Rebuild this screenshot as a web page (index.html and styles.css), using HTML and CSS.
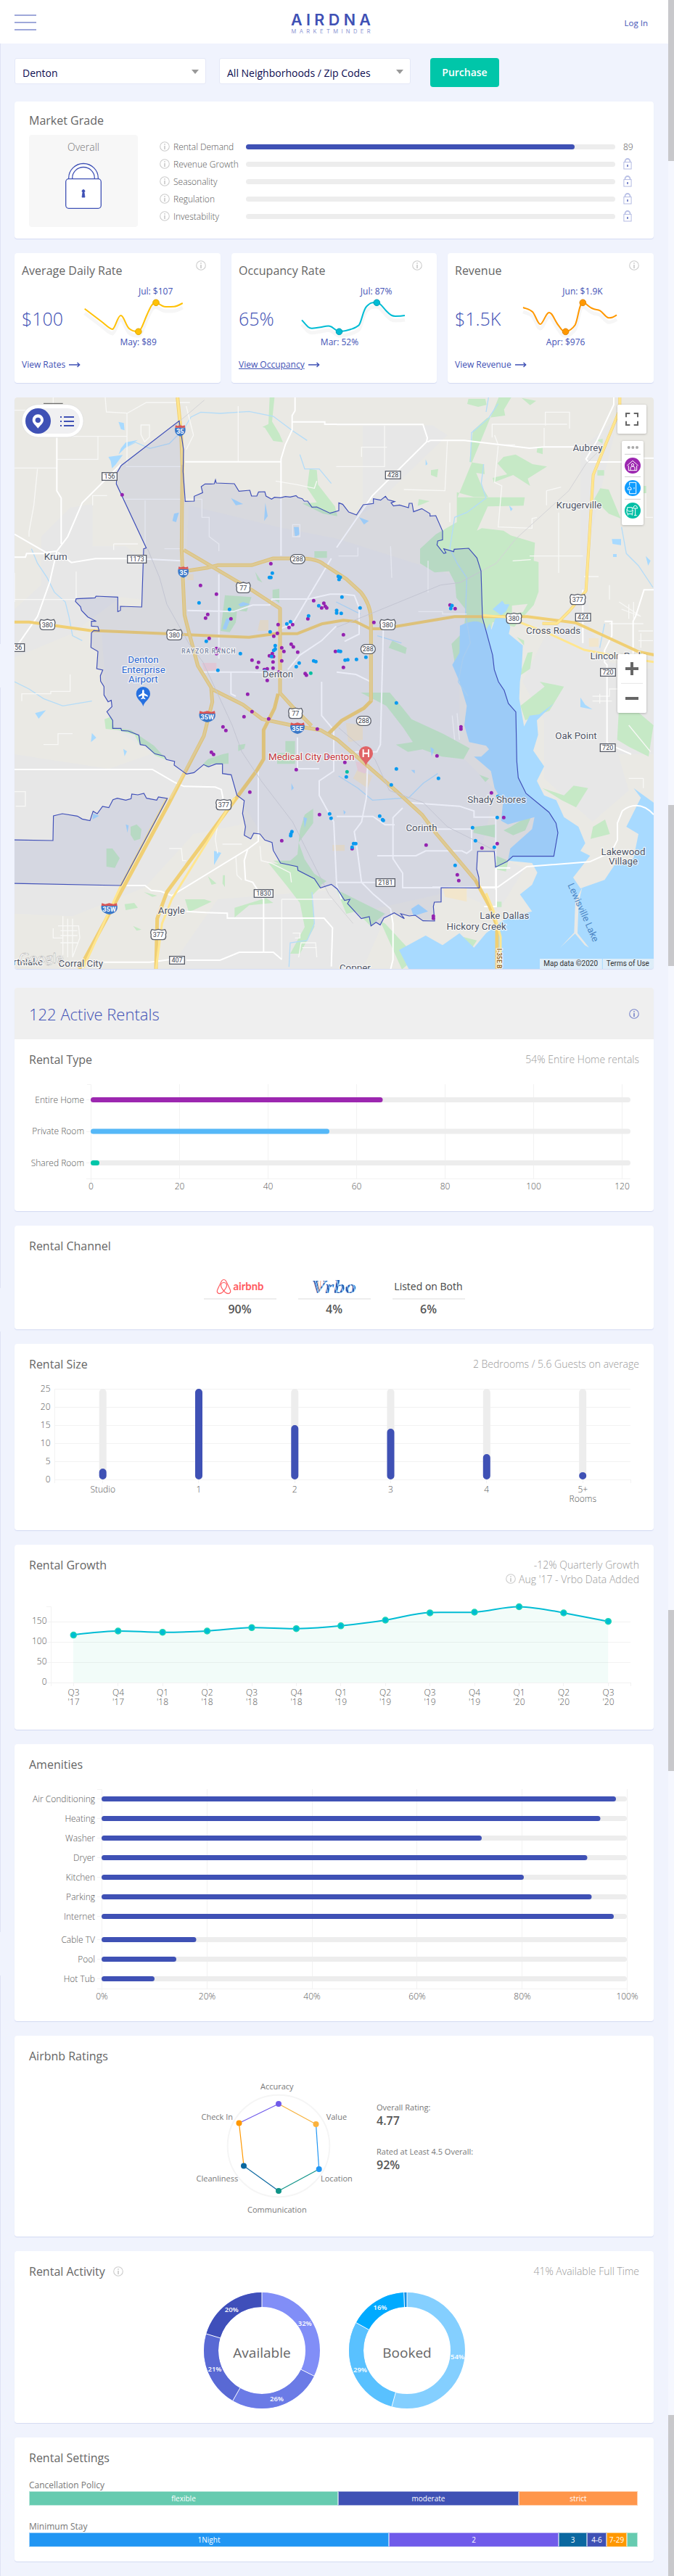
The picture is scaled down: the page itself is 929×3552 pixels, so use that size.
FILE: index.html
```html
<!DOCTYPE html>
<html lang="en">
<head>
<meta charset="utf-8">
<title>AirDNA MarketMinder</title>
<link rel="stylesheet" href="styles.css">
</head>
<body>
<svg class="defs" width="0" height="0">
  <symbol id="info" viewBox="0 0 14 14"><circle cx="7" cy="7" r="6.3" fill="none" stroke="currentColor" stroke-width="1.1"/><path d="M7 3.2v1.6M7 6v5" stroke="currentColor" stroke-width="1.7"/></symbol>
  <symbol id="lock" viewBox="0 0 12 16"><path d="M2.500 6V4.500a3.500 3.500 0 0 1 7 0V6" fill="none" stroke="#b9c0e6" stroke-width="1.800"/><rect x=".9" y="5.600" width="10.200" height="9.400" fill="#fff" stroke="#b4bbe3"/><path d="M6 9v3" stroke="#3f51b5" stroke-width="1.300"/></symbol>
  <symbol id="arrow" viewBox="0 0 16 8"><path d="M0 4h14.500M11.500 1l3.200 3-3.200 3" fill="none" stroke="#3f51b5" stroke-width="1.400"/></symbol>
</svg>
<header class="topbar">
  <div class="burger"><i></i><i></i><i></i></div>
  <svg class="logo" width="112" height="32" viewBox="401 16 112 32">
    <text x="402" y="34.500" class="logo-main" textLength="110">AIRDNA</text>
    <text x="402.500" y="46" class="logo-sub" textLength="109">MARKETMINDER</text>
  </svg>
  <a class="login">Log In</a>
</header>
<main class="page">
  <div class="filters">
    <div class="select"><span>Denton</span><i></i></div>
    <div class="select second"><span>All Neighborhoods / Zip Codes</span><i></i></div>
    <div class="purchase">Purchase</div>
  </div>

  <section class="card grade">
    <h2>Market Grade</h2>
    <div class="grade-body">
      <div class="overall"><span>Overall</span>
        <svg width="54" height="66" viewBox="88 224 54 66" fill="#fff" stroke="#3f51b5" stroke-width="1.300"><path d="M94.700 247V245.500a20.300 20 0 0 1 40.600 0V247zM99.700 247v-1.500a15.300 15 0 0 1 30.600 0V247z"/><rect x="90.700" y="246.700" width="48.600" height="40.600" rx="4"/><path d="M115 261.500a2 2 0 0 1 1 3.700l1 6.800h-4l1-6.800a2 2 0 0 1 1-3.700z" fill="#3f51b5" stroke-width=".8"/></svg>
      </div>
      <div class="rows">
        <div class="row"><svg class="ic"><use href="#info"/></svg><label>Rental Demand</label><div class="track"><b style="width:453px"></b></div><em>89</em></div>
        <div class="row"><svg class="ic"><use href="#info"/></svg><label>Revenue Growth</label><div class="track"></div><svg class="lk"><use href="#lock"/></svg></div>
        <div class="row"><svg class="ic"><use href="#info"/></svg><label>Seasonality</label><div class="track"></div><svg class="lk"><use href="#lock"/></svg></div>
        <div class="row"><svg class="ic"><use href="#info"/></svg><label>Regulation</label><div class="track"></div><svg class="lk"><use href="#lock"/></svg></div>
        <div class="row"><svg class="ic"><use href="#info"/></svg><label>Investability</label><div class="track"></div><svg class="lk"><use href="#lock"/></svg></div>
      </div>
    </div>
  </section>

  <div class="trio">
    <section class="card stat">
      <div class="stat-head"><h2>Average Daily Rate</h2><svg class="ic"><use href="#info"/></svg></div>
      <div class="stat-body"><strong>$100</strong>
        <svg width="160" height="90" viewBox="111 392 160 90" class="spark">
          <path class="shade" d="M116.700 425.700L142 445C149 451 152 454 155 454C159 453 162 435 166.500 435C171 435 173 449 178.300 453.300S187 457 190.800 457.300C195 456 198 444 202.600 434S209 418 215 417.300C219 418 222 422 226.300 422.700S236 423 240 422.700S248 420 251.800 418"/>
          <path stroke="#ffc107" d="M116.700 425.700L142 445C149 451 152 454 155 454C159 453 162 435 166.500 435C171 435 173 449 178.300 453.300S187 457 190.800 457.300C195 456 198 444 202.600 434S209 418 215 417.300C219 418 222 422 226.300 422.700S236 423 240 422.700S248 420 251.800 418"/>
          <g fill="#ffc107" stroke="#e0a800"><circle cx="190.800" cy="457.300" r="4.300"/><circle cx="215" cy="417.300" r="4.300"/></g>
          <text x="214.600" y="406">Jul: $107</text><text x="190.600" y="476">May: $89</text>
        </svg></div>
      <a class="view"><span>View Rates</span> <svg width="16" height="8"><use href="#arrow"/></svg></a>
    </section>
    <section class="card stat">
      <div class="stat-head"><h2>Occupancy Rate</h2><svg class="ic"><use href="#info"/></svg></div>
      <div class="stat-body"><strong>65%</strong>
        <svg width="160" height="90" viewBox="400 392 160 90" class="spark">
          <path class="shade" d="M407 441.300C413 448 416 453 421 452.700S428 452 432.500 451.300S441 449 445.500 449.700S453 456 458.500 457.300C463 457 469 456 474 454.300S482 452 485.800 448.300C490 442 491 428 496.500 422.300S505 417 510 417C515 417 518 423 523.700 429S532 436 536 436S544 436 549 435"/>
          <path stroke="#00bcd4" d="M407 441.300C413 448 416 453 421 452.700S428 452 432.500 451.300S441 449 445.500 449.700S453 456 458.500 457.300C463 457 469 456 474 454.300S482 452 485.800 448.300C490 442 491 428 496.500 422.300S505 417 510 417C515 417 518 423 523.700 429S532 436 536 436S544 436 549 435"/>
          <g fill="#00bcd4" stroke="#009db5"><circle cx="458.500" cy="457.300" r="4.300"/><circle cx="510.300" cy="417.300" r="4.300"/></g>
          <text x="509.600" y="406">Jul: 87%</text><text x="459" y="476">Mar: 52%</text>
        </svg></div>
      <a class="view"><span class="under">View Occupancy</span> <svg width="16" height="8"><use href="#arrow"/></svg></a>
    </section>
    <section class="card stat">
      <div class="stat-head"><h2>Revenue</h2><svg class="ic"><use href="#info"/></svg></div>
      <div class="stat-body"><strong>$1.5K</strong>
        <svg width="160" height="90" viewBox="708 392 160 90" class="spark">
          <path class="shade" d="M721 424C726 426 730 426 734 430S741 447 744.700 447S752 432 756.500 431S764 441 769.500 448.300S775 457 779.600 457.300S790 452 792.600 448.300C797 440 798 418 803.300 417.300C807 417 810 422 815.800 425S823 426 827 428.300S835 438 838.900 438.300S846 437 850 434.300"/>
          <path stroke="#ff9800" d="M721 424C726 426 730 426 734 430S741 447 744.700 447S752 432 756.500 431S764 441 769.500 448.300S775 457 779.600 457.300S790 452 792.600 448.300C797 440 798 418 803.300 417.300C807 417 810 422 815.800 425S823 426 827 428.300S835 438 838.900 438.300S846 437 850 434.300"/>
          <g fill="#ff9800" stroke="#e08300"><circle cx="779.600" cy="457.300" r="4.300"/><circle cx="803.300" cy="417.300" r="4.300"/></g>
          <text x="803" y="406">Jun: $1.9K</text><text x="779.600" y="476">Apr: $976</text>
        </svg></div>
      <a class="view"><span>View Revenue</span> <svg width="16" height="8"><use href="#arrow"/></svg></a>
    </section>
  </div>

  <section class="card map">
  <svg width="881" height="788" viewBox="60 24 2643 2364" class="mapsvg">
    <rect x="60" y="24" width="2643" height="2364" fill="#eae9e4"/>
    <g fill="#e7e7e7">
      <path d="M170 600L290 480L383 465V640L520 640L600 700L590 860L500 850L300 1000L60 1100V1500L450 1560L680 1480L770 1580L900 1560L1000 1600L1000 1790L800 1830L600 2050L300 2170L60 2160V1300H60V900L170 800z"/>
      <path d="M1540 480L1850 180L1790 140H1500V500zM2400 240L2560 100L2500 340L2420 700L2440 980L2520 1120L2703 1150V1500H2330L2160 1200L2260 1000L2400 840zM1392 2060L1600 2160L1500 2388H700L900 2100zM2250 1350L2500 1310L2600 1650L2450 1780L2250 1600zM1980 1900L2170 1970L2060 2150L1850 2050z"/>
      <path d="M780 470L1150 560L1400 610L2000 800L1900 1050L1900 1500L2050 1650L1950 2050L1500 2150L1160 1950L1000 1700L760 1580L450 1380L420 1000L760 1000z"/>
    </g>
    <g fill="#c6e9c6">
      <path d="M1115 24h20l-10 100 30 50 15 35-40-5-35-55-10-3 25-12zM1280 320l30 5 5 60 70 90 10 40-60-10-85-42 60-5-40-60zM1300 660h52v28h-52zM930 842l110 8-20 60-40-5-5 50-25 40-38-5 10-80zM1055 745l30 45-20-10zM1127 820l28-5v60l-28-20z"/>
      <path transform="translate(1392 0)" d="M670 24h52l-30 50 5 25-75 10-58 52-15 130 60 10 3 40-35-5 25 60 25 40-60 0-70-20V540L410 590l-65 60v60l60 38 60-5 25 50 5 60 40 50-10 90-50 50 20 120 80 90 70-300 90 20 80-90 20-55V705l-20-5 5-75-100-30-30-20-90-10-20 10 45-100 148-3 5-35H500M545 30h70l5 25-35 8-45-12zM765 26l60 12-25 18zM690 270l50-10 70 40 60 10-80 50 10 30-70-45-80 30-5-18 60-15-40-45zM1075 200l25-5v20zM830 232l22-3v30l-25-8zM1078 325h28v22h-28zM1090 400l35 5 50 120-50-20-60-60zM725 885l65-7-20 35-45 5zM745 1015l30 15v20zM790 1080l20-3-10 70-45 30zM390 325l30-5-5 35-25-10zM340 445l45 8-50 20zM230 1030l60 30-5 25-70-25zM1260 390h20v30h-20z"/>
      <path transform="translate(0 1200)" d="M460 145l-28 10 5 40 50 5 70 20 20 40 25 5 40 40 50 20-55-60-95-65-70-10zM540 600l25-10 20 20-5 40-25 8-15-25zM440 690l25 0 30 40-20 40-35-5zM515 920l40-5 15 20-50 10zM765 900l80 0 30 10-75 35-20 5zM550 1010l35 15-20 5zM985 262l30-5-5 20-25 10zM1180 245h40v95h-74v-45h34zM1260 550l35-25v60l-60 80 25 70 40 60 50 30-30 20-110-60-80-45 70 0 30-25 10-100zM920 300l25-5v45h-70l-20 15-15-15 20-20zM595 870l55 15-20 5zM860 805l35 30-20 5zM922 800h8v50l-10-15zM1110 750l130 10 90 85-40 40 10 130-60 110-40 0 60-110-20-100-50-65zM1100 895l30 20-100 10-60 50 0-40z"/>
      <path transform="translate(1392 1200)" d="M100 45l120 0 50 60 40 50 130 60 110 60-25 45-90-10-80-30-60 10-50-30 70-10-40-60-70-90zM570 0l180 120 10 60-80-35-130-30-20 40zM840 0l100 20-60 100-100 40-20-60 100-80zM1170 60l140 120-20 130-80-40-50-30zM850 440l90 30 40-40 60 10-50 80-60-30zM1060 600l50-30 20 60-80 20zM570 600l90-10-5 55-90-20zM720 600l90-55-30 70-50 20-40-20zM660 720l50 20-10 45-45-10zM660 910h22v22h-22zM0 860l200 100-60 50-60-60-40 10zM200 1000l130 140-60 50-90-200zM500 1050l80 20-40 60-70-30zM840 1030l80 80-20 40-70-30zM1290 890v60l-25-20zM590 385l40 15-15 15z"/>
    </g>
    <g fill="#a8daff">
      <path d="M1902 968C1940 950 1980 940 2002 965L2010 985L2025 960L2032 985L2050 932H2096L2110 975L2104 1002L2162 1050L2157 1150L2150 1200L2147 1270L2167 1385L2190 1340L2230 1335L2290 1290L2220 1360L2225 1420L2205 1485L2250 1550L2220 1610L2250 1670L2300 1690L2332 1760L2392 1800L2420 1868L2400 1900L2440 1920L2370 2010L2400 2055L2500 2020L2540 1960L2620 1930L2640 1830L2590 1800L2650 1680L2620 1640L2703 1700V2388H1690L1650 2310L1760 2250L1830 2290L1900 2240L1960 2300L2010 2240L2090 2180L2200 2150L2150 2080L2200 2040L2222 1990L2200 1950L2100 1940L2110 1890L2200 1810L2210 1760L2100 1790L2072 1775L2080 1700L2045 1640L2030 1570L1960 1510L1990 1510L2022 1480L2010 1465L1940 1450L1920 1380L1930 1300L1900 1200L1870 1130L1900 1080zM2037 900l40-35 10 15 20 0-15 30-20 15z"/>
      <path d="M448 270l60-8-30 40-15 15-5-30zM490 125l22 5 3 30-15-5zM570 200l-50 10-20 25-10 25 30-30zM720 505l20-5-12 40-15-5zM955 440l20 10 30 15-30 5zM1097 460l10 55-15 20zM1215 560h20l5 30-20 10zM935 940l20-5-20 50-15-3zM985 880l20-10 30 10-40 10zM145 1330l45-12-30 35zM380 1412l18 20-22 18zM510 1478l15 10-10 20zM385 1745l25 10-28 15zM885 1900l30 8-30 50zM520 1790l12 5-5 30zM1760 280l8 20-8 5zM2530 610h38v25l-35-5zM2535 672h15v12h-15zM2670 680l20 20-10 20zM1485 520l40 15-20 15zM2105 470l15 15-8 10z"/>
      <path d="M2400 1265l20 30 30 20-50-10zM1255 1760l15 5-10 40zM1205 1620l10 20-10 10zM1420 1730l10 10-8 10zM1780 1470l15 10-10 30zM1700 1565h15v15zM1730 2120l40 30-60 20-10-30z"/>
    </g>
    <path d="M2408 2050l-15 60-5 130 48 60-18-10-40-48-62 58 58-62 5-130z" fill="#e9e9e6"/>
    <g fill="none" stroke="#b4dcf8" stroke-width="4">
      <path d="M130 650l25 60 40 60 30 60 45 40 15 60 15 80 40 20M520 230l40-20 60 25 80-20 60-60 30-50 40-20 80 5 120-8 100 20 80 60 60 40M1240 260l20 60 60 0 50 60M60 1200l60 30 60 40 80 30 120-20M1290 2070l10 130-30 70-70 10-5 100M1390 870l100 50M2000 300l-10 80 20 60-80 60-50 20-20 130 30 60 40 60-5 150 20 120-30 60-20 100 40 60M2570 560l20 110 50 50 60 90M2060 50l-40 60-70 60-5 120M1560 1010l100 30M2020 24l-10 60M2500 960l-20 100M1400 1590l80 50 60 50 150-10 60-60 60-40"/>
    </g>
    <g fill="#f2e6cc"><path d="M1075 945h35v45h-45zM770 755h30v25h-25zM1430 1370l70 10 0 60-60 10zM1480 1560l60 30-20 50-60-40zM1830 2050l100 0 0 60-90-20zM2435 1020h40v35h-40zM1375 1875h50v25h-50z"/></g>
    <path d="M835 1122l60 0 0 30-50 5zM1470 1530l60 10-20 40-30-10z" fill="#f3d5da"/>
    <g fill="none" stroke="#f8f8f6" stroke-width="4">
      <path d="M60 77h60M220 24v60M435 24l5 60 85 5M525 90v210M235 185h290M235 280h170v-95M60 316h175M155 320l-15 150-20 110v20M383 470V430h60M520 310h230M505 445h330v75h30v80l40 30v30M600 450v180M470 630h100M470 630v25M680 650h80M60 860h250M525 90l80-45 180 0M985 60v230M583 138h35v50l-20 20-15-30zM770 60l30 120-30 60M1140 370l90 15 70 15 10-30M1210 550h30v50h-30zM315 745v110M60 750v120M1590 140v170h-200M1600 230h-105v40M1850 205l-10 205-170-5M2035 190v-55h310M2130 220l-70 0-15-40M2255 140V85h100v68M2250 150v75M2060 225l-15 150 30 15-15 170 140 5v-40l20-5M2260 470v-60l60-15M2310 500v250M2190 680h220M2120 700l75-5M2415 765h60M2520 800v60M2520 960h140M2670 420v100h30M1860 540v-80M1400 680h80v-35M1615 640l5 130M1770 700v130M1730 910h100v10h100"/>
      <path d="M90 1280v-30h120v-10h80v-70M180 1460h60v-45h60M60 1655h45v60h-40M700 1890h50l5 50h15M900 1790l-10 60 10 60M975 1920l5 80 20 20M920 1872h80M1075 1880l5 60 40 10 80 40 5 40M1165 2100h210M1165 2100v250M240 2210h85l5 50-30 80M260 2170v160M280 2180v160M300 2180v160M250 2230h70M250 2250h70M250 2280h70M220 2220v40h40M1210 2240h30v20l-20 0M1235 2340l10-60 60 0 5 60M1250 2300h60M2560 870l90 60M2570 900l80 30M2600 880v60M2620 870v70M2640 990h60M2640 1030h60M2650 1000v60M2450 1260h70v-30h80M2450 1280h80M2480 1250v40M2600 1600h60v40M2600 1380l90 110M1870 1340l10 100M1890 1330l10 110"/>
    </g>
    <g fill="none" stroke="#fff" stroke-width="6">
      <path d="M235 190v220l18 30v190M60 590l130 75 45-5M60 685h45l5-15h90M500 300L340 460l-60 140-45 60-30 130-50 140-80 115M240 665l55 42 100-16h130M600 692l150 8M1220 24v55l-12 20v60l-28 60-18 60v400M1208 125h135v10h50M766 290h395M1392 136h357l18 55-3 17L1540 430 1392 645M1370 690L1210 960l-60 25M1768 208l12-6h140l270 32 60-5h150M2538 24v30l-70 150-45 75 10 12h145M775 905l190 5 80-27h70l10-25 150 0 90-20h50l50 5 20 50v110l-60 30M840 1160h200l150 5M955 1160v90l20 10M1190 1150l50-60 90-60 60-60M905 755v350M1585 980l-12 480-15 30h-90M1392 1160l80 10 60 30M2410 820v220M2703 820h-40l-35 110-10 20v220M2703 275h-65"/>
      <path d="M60 1563h570l90 52 40 18 130 3 25 10 10 50M500 2043h100l25 20 40 4 45 18 318-195 40-30v-290M1025 1890l-15 50 5 80 30 10 45 70v220M770 2150l80 5 90 3v20h400l35 40-5 160M430 2360l190 0 80-10M770 2352h140l80-33 140 0 35 30M1330 1200v140l50 60v170l-60 40v60l60 110 12 260 20 60M1230 1430v130h90M1520 1540l-5 140-20 100-30 40 10 60 20 150 50 50 70 60 10 60v150l-10 40M1392 1757h150l50 35h40M1392 2030h160M1665 1722l-40 40v170l40 60 0 60 380 0M2050 2060v-90h2v160h-50M2050 1970l60 0M2500 950l30 0 0 60-30 60v50l10 10v320l10 10 90 40M2703 1750c-50-55-100-40-130-15l-20 50v70l-25 50-90 40-260 20-120 85h-270M1690 1700l210 15 60 20v25h90v200M1560 1920h160l40-20h150l20 10 20-15V1810h-170"/>
    </g>
    <g fill="none" stroke-linejoin="round">
      <path stroke="#f0cf74" stroke-width="15" d="M734 24l15 150 5 130-3 350 12 270 10 40 45 170 55 90 5 60-35 140-145 280-370 684M875 1230l130 65 80 60 120 25 120 20 70 40 230 200 120 110 60 80 160 190 60 110 30 80V2388M760 655l280 165 118 77v350l50 55 80 80M1150 1250l-15 60-45 90 0 120-30 50-370 500-40 110-5 208M780 740l80-12 40-10h140l90-28h110q70 0 100 25l92 60 60 55q40 50 42 110v340l-30 30-90 50-60 60"/>
      <path stroke="#f0cf74" stroke-width="12" d="M60 953h60l250 35 350 15 180 8 130 5 110-15h90l100-40 90-15 50 5 60 30h50l300-50h300l200 25 120 55 140 65 150 30 260 40M2563 24v50l-110 270-30 480-70 85-50 50-60 0"/>
      <path stroke="#ffe68f" stroke-width="9" d="M734 24l15 150 5 130M690 1683l-190 360-155 340M2010 2075l30 70 30 110V2388M970 1680l-260 420-40 100-25 188M2563 24v50l-110 270-30 480-70 85-50 50-60 0M1995 925l100 8 180 70 140 65 150 30 138 20"/>
      <path stroke="#f0d893" stroke-width="9" d="M754 304l-3 350 12 270 10 40 45 170 55 90 5 60-35 140-140 260M875 1230l130 65 80 60 120 25 120 20 70 40 230 200 120 110 60 80 160 190M760 655l280 165 118 77v350l50 55 80 80M780 740l80-12 40-10h140l90-28h110q70 0 100 25l92 60 60 55q40 50 42 110v340"/>
    </g>
    <path d="M845 35l-70 60-60 50M610 650l50 120 30 110 90 160 60 80 120 260 40 110 80 120 130 170 150 300 100 120M1392 975l150-60 280-115 80-10 150-80 80-100 220-200 70-110 60-60M1400 1390l150 130 60 130 140 50 100 100 200 100" fill="none" stroke="#d3d3d6" stroke-width="3"/>
    <g fill="#3f51b5" fill-opacity=".1" stroke="#3f4fb8" stroke-width="3.500">
      <path d="M741 121L759 240 757 330 766 454 803 453 803 433 838 418 832 393 848 382 872 382 886 381 891 365 894 378 969 381 988 412 1033 408 1040 432 1062 432 1069 415 1095 414 1100 432 1123 445 1135 437 1160 439 1180 434 1200 436 1224 430 1232 438 1250 443 1258 453 1272 453 1290 478 1310 477 1365 503 1401 492 1401 460 1417 466 1442 498 1474 510 1502 468 1544 463 1544 443 1574 449 1594 433 1604 447 1632 455 1617 460 1627 473 1652 469 1689 480 1692 462 1704 462 1710 497 1744 484 1778 505 1778 515 1802 513 1830 577 1830 613 1810 618 1807 634 1835 669 1844 667 1835 650 1876 662 1878 652 1938 648 1972 688 1989 742 1995 935 2037 1090 2044 1150 2061 1200 2085 1236 2102 1290 2133 1325 2137 1530 2143 1597 2175 1662 2270 1740 2299 1785 2307 1825 2290 1922 2121 1922 2097 1943 2049 1967 2044 1902 1975 1902 1971 1975 1980 2010 1982 2053 1824 2052 1824 2111 1796 2112 1792 2130 1797 2190 1749 2189 1717 2166 1692 2169 1657 2160 1672 2180 1630 2156 1587 2178 1572 2206 1555 2195 1534 2210 1527 2172 1494 2180 1437 2118 1447 2100 1425 2105 1395 2058 1370 2038 1325 2053 1300 2015 1232 1980 1230 1965 1160 1950 1130 1898 1125 1865 1095 1855 1075 1830 1049 1827 1037 1850 1010 1835 1015 1800 1003 1745 1010 1692 980 1670 956 1585 920 1580 920 1540 893 1540 862 1552 842 1543 802 1576 771 1582 720 1545 722 1530 688 1522 680 1508 640 1498 602 1464 580 1460 574 1421 530 1404 503 1402 500 1393 466 1393 466 1360 442 1324 463 1303 460 1277 447 1283 430 1255 430 1220 416 1198 415 1175 425 1152 400 1146 405 1075 376 1058 378 998 388 988 410 990 405 972 378 970 378 950 398 950 363 932 337 905 333 890 312 868 315 857 393 853 397 846 487 850 487 910 498 905 498 888 586 891 594 650 605 647 481 382 484 335 501 306z"/>
      <path d="M50 1854L219 1857 221 1755 258 1746 320 1756 340 1768 372 1775 385 1736 402 1746 424 1716 450 1721 467 1688 485 1682 520 1690 542 1684 545 1665 570 1668 595 1662 606 1682 648 1690 655 1677 692 1683 500 2043 50 2034z"/>
    </g>
    <g fill="none" stroke-width="15" stroke-linecap="round">
      <path stroke="#9423b0" d="M505 427h0M1120 712h0M829 802h0M895 838h0M859 922h0M850 937h0M955 940h0M1297 865h0M1339 875h0M1345 888h0M1330 895h0M1351 895h0M1273 940h0M1150 964h0M1210 964h0M1195 976h0M1147 1000h0M1132 1012h0M865 1021h0M895 1063h0M904 1066h0M895 1084h0M1204 1045h0M1213 1056h0M1165 1060h0M1174 1075h0M1231 1078h0M1387 1075h0M1126 1084h0M1114 1093h0M1131 1096h0M1042 1111h0M1069 1120h0M1165 1114h0M1129 1118h0M1063 1141h0M1129 1144h0M1093 1150h0M1105 1147h0M1153 1160h0M1262 1166h0M1267 1173h0M1105 1195h0M1861 883h0M1882 898h0M1546 955h0M1420 1006h0M1420 1141h0M1024 1252h0M1042 1324h0M1009 1345h0M1111 1354h0M922 1387h0M934 1402h0M1312 1396h0M874 1492h0M883 1501h0M1360 1510h0M1225 1564h0M1033 1657h0M1321 1750h0M1165 1858h0M1426 1534h0M1906 1387h0M1906 1396h0M1807 1507h0M2032 1660h0M2083 1762h0M2056 1870h0M1993 1888h0M1762 1876h0M1456 1891h0M1891 1999h0M1897 2023h0M1792 2170h0M1792 2179h0"/>
      <path stroke="#0a9af0" d="M1126 751h0M1114 769h0M1120 769h0M823 874h0M949 901h0M1318 886h0M1276 928h0M1201 952h0M1186 961h0M1117 994h0M853 1033h0M994 1084h0M1138 1051h0M1138 1065h0M1132 1070h0M1123 1096h0M1237 1123h0M1225 1138h0M1297 1114h0M1306 1117h0M901 1153h0M1096 1156h0M1392 905h0M1392 916h0M1399 764h0M1407 768h0M1402 777h0M1414 850h0M1489 895h0M1411 917h0M1869 885h0M1864 897h0M1400 1073h0M1408 1075h0M1427 1111h0M1438 1109h0M1474 1108h0M1513 1099h0M1363 1747h0M1369 1765h0M1207 1820h0M1203 1830h0M1202 1837h0M1639 1288h0M1432 1594h0M1639 1561h0M1618 1627h0M1813 1600h0M2059 1675h0M2056 1762h0M1570 1756h0M1582 1771h0M1585 1774h0M1954 1804h0M1966 1858h0M2044 1885h0M1462 1870h0M1471 1870h0M1456 1885h0M1882 1960h0"/>
      <path stroke="#08bfa0" d="M1285 1165h0M1435 1573h0"/>
    </g>
    <g class="towns">
      <text x="230" y="695">Krum</text><text x="1149" y="1182">Denton</text><text x="2430" y="247">Aubrey</text><text x="2394" y="484">Krugerville</text><text x="2288" y="1003">Cross Roads</text><text x="2550" y="1106">Lincoln Park</text><text x="2382" y="1438">Oak Point</text><text x="2054" y="1700">Shady Shores</text><text x="1743" y="1817">Corinth</text><text x="2577" y="1917">Lakewood</text><text x="2577" y="1955">Village</text><text x="2086" y="2180">Lake Dallas</text><text x="1970" y="2225">Hickory Creek</text><text x="709" y="2159">Argyle</text><text x="334" y="2378">Corral City</text><text x="116" y="2372">rthlake</text><text x="1468" y="2396">Copper</text>
      <g fill="#2b67d1"><text x="592" y="1122">Denton</text><text x="593" y="1164">Enterprise</text><text x="592" y="1204">Airport</text></g>
      <text x="1288" y="1524" fill="#c5353b">Medical City Denton</text>
      <text x="864" y="1082" class="area">RAYZOR RANCH</text>
      <text transform="translate(2400 2160) rotate(66)" class="lake">Lewisville Lake</text>
      <text transform="translate(2056 2345) rotate(90)" class="i35">I-35E B</text>
    </g>
    <path d="M592 1302c-4-20-29-30-29-52a29 29 0 0 1 58 0c0 22-25 32-29 52z" fill="#2670e0"/><path d="M592 1233c4 0 4 6 4 14l15 10v5l-15-5v8l5 4v4l-9-3-9 3v-4l5-4v-8l-15 5v-5l15-10c0-8 0-14 4-14z" fill="#fff"/>
    <path d="M1513 1548c-4-20-29-30-29-52a29 29 0 0 1 58 0c0 22-25 32-29 52z" fill="#e06468"/><path d="M1502 1480v32m22-32v32m-22-16h22" fill="none" stroke="#fff" stroke-width="6"/>
    <g class="us">
      <g transform="translate(1006 811)"><path d="M-24-21l10 3 14-4 14 4 10-3q8 12 3 20q4 22-12 22h-30q-16 0-12-22q-5-8 3-20z"/><text y="11">77</text></g>
      <g transform="translate(196 964)"><path d="M-27-21l13 3 14-4 14 4 13-3q8 12 3 20q4 22-12 22h-36q-16 0-12-22q-5-8 3-20z"/><text y="11">380</text></g>
      <g transform="translate(721 1006)"><path d="M-27-21l13 3 14-4 14 4 13-3q8 12 3 20q4 22-12 22h-36q-16 0-12-22q-5-8 3-20z"/><text y="11">380</text></g>
      <g transform="translate(1603 964)"><path d="M-27-21l13 3 14-4 14 4 13-3q8 12 3 20q4 22-12 22h-36q-16 0-12-22q-5-8 3-20z"/><text y="11">380</text></g>
      <g transform="translate(2125 938)"><path d="M-27-21l13 3 14-4 14 4 13-3q8 12 3 20q4 22-12 22h-36q-16 0-12-22q-5-8 3-20z"/><text y="11">380</text></g>
      <g transform="translate(2389 860)"><path d="M-27-21l13 3 14-4 14 4 13-3q8 12 3 20q4 22-12 22h-36q-16 0-12-22q-5-8 3-20z"/><text y="11">377</text></g>
      <g transform="translate(925 1709)"><path d="M-27-21l13 3 14-4 14 4 13-3q8 12 3 20q4 22-12 22h-36q-16 0-12-22q-5-8 3-20z"/><text y="11">377</text></g>
      <g transform="translate(655 2246)"><path d="M-27-21l13 3 14-4 14 4 13-3q8 12 3 20q4 22-12 22h-36q-16 0-12-22q-5-8 3-20z"/><text y="11">377</text></g>
      <g transform="translate(1222 1331)"><path d="M-24-21l10 3 14-4 14 4 10-3q8 12 3 20q4 22-12 22h-30q-16 0-12-22q-5-8 3-20z"/><text y="11">77</text></g>
      <g transform="translate(1231 693)"><rect x="-30" y="-19" width="60" height="38" rx="19"/><text y="10">288</text></g>
      <g transform="translate(1522 1065)"><rect x="-30" y="-19" width="60" height="38" rx="19"/><text y="10">288</text></g>
      <g transform="translate(1504 1362)"><rect x="-30" y="-19" width="60" height="38" rx="19"/><text y="10">288</text></g>
      <g transform="translate(453 351)"><rect x="-31" y="-16" width="62" height="32"/><text y="10">156</text></g>
      <g transform="translate(70 1059)"><rect x="-31" y="-16" width="62" height="32"/><text x="6" y="10">56</text></g>
      <g transform="translate(566 693)"><rect x="-39" y="-16" width="78" height="32"/><text y="10">1173</text></g>
      <g transform="translate(1625 345)"><rect x="-31" y="-16" width="62" height="32"/><text y="10">428</text></g>
      <g transform="translate(2411 933)"><rect x="-31" y="-16" width="62" height="32"/><text y="10">424</text></g>
      <g transform="translate(2514 1161)"><rect x="-31" y="-16" width="62" height="32"/><text y="10">720</text></g>
      <g transform="translate(2513 1473)"><rect x="-31" y="-16" width="62" height="32"/><text y="10">720</text></g>
      <g transform="translate(1090 2076)"><rect x="-39" y="-16" width="78" height="32"/><text y="10">1830</text></g>
      <g transform="translate(732 2352)"><rect x="-31" y="-16" width="62" height="32"/><text y="10">407</text></g>
      <g transform="translate(1594 2031)"><rect x="-39" y="-16" width="78" height="32"/><text y="10">2181</text></g>
    </g>
    <g class="inter">
      <g transform="translate(745 161)"><path d="M-21-12h42q6 28-21 36q-27-8-21-36z"/><path class="red" d="M-19-22l9 3 10-3 10 3 9-3 2 10h-42z"/><text y="13">35</text></g>
      <g transform="translate(758 746)"><path d="M-21-12h42q6 28-21 36q-27-8-21-36z"/><path class="red" d="M-19-22l9 3 10-3 10 3 9-3 2 10h-42z"/><text y="13">35</text></g>
      <g transform="translate(857 1344)"><path d="M-33-12h66q5 28-33 36q-38-8-33-36z"/><path class="red" d="M-31-23l14 4 17-4 17 4 14-4 2 11h-66z"/><text y="13">35W</text></g>
      <g transform="translate(1230 1392)"><path d="M-29-12h58q5 28-29 36q-34-8-29-36z"/><path class="red" d="M-27-23l12 4 15-4 15 4 12-4 2 11h-58z"/><text y="13">35E</text></g>
      <g transform="translate(452 2139)"><path d="M-33-12h66q5 28-33 36q-38-8-33-36z"/><path class="red" d="M-31-23l14 4 17-4 17 4 14-4 2 11h-66z"/><text y="13">35W</text></g>
    </g>
    <text x="80" y="2364" class="google">Google</text>
    <path d="M180 49h80" stroke="#555" stroke-width="3"/>
    <g><rect x="90" y="53" width="255" height="136" rx="68" fill="#fff" stroke="#ddd" stroke-width="2"/><rect x="105" y="69" width="225" height="105" rx="52" fill="#f0f0f2"/><circle cx="157.500" cy="121.500" r="52.500" fill="#3f51b5"/><path d="M157 152c-6-10-23-20-23-35a23 23 0 0 1 46 0c0 15-17 25-23 35z" fill="#fff"/><circle cx="157" cy="118" r="11" fill="#3f51b5"/><path d="M264 105h42M264 123h42M264 141h42M249 105h6M249 123h6M249 141h6" stroke="#3f51b5" stroke-width="6"/></g>
    <g transform="translate(1392 0)">
      <g class="ctl"><rect x="1161" y="54" width="120" height="120" rx="6"/><rect x="1179" y="204" width="90" height="348" rx="6"/><rect x="1161" y="1086" width="120" height="243" rx="6"/></g>
      <path d="M1197 106V90h16M1229 90h16v16M1245 122v16h-16M1213 138h-16v-16" fill="none" stroke="#666" stroke-width="6"/>
      <g fill="#aaa"><circle cx="1208" cy="231" r="6"/><circle cx="1225" cy="231" r="6"/><circle cx="1242" cy="231" r="6"/></g>
      <path d="M1191 259h66M1191 352h66M1191 445h66" stroke="#ccc" stroke-width="3"/>
      <circle cx="1224" cy="306" r="33" fill="#9c27b0"/><circle cx="1224" cy="399" r="33" fill="#0f9cff"/><circle cx="1224" cy="492" r="33" fill="#00bfa5"/>
      <g fill="none" stroke="#fff" stroke-width="3"><path d="M1201 306l23-20 23 20M1207 306v20h34v-20M1215 326v-13q9-9 18 0v13"/><circle cx="1224" cy="303" r="5"/><path d="M1211 388v-12h27v46h-27v-12M1204 399l7-6 7 6v7h-14zM1230 396v7M1202 488v-9h20v9M1200 487q-1 17 3 19h20l2-17-6 6h-12zM1204 506v6M1222 506v6M1226 483q2-12 9-12t9 12zM1235 483v29M1230 512h11"/></g>
      <path d="M1194 1146h54M1221 1119v54M1194 1269h54" stroke="#666" stroke-width="12"/><path d="M1176 1207h90" stroke="#e6e6e6" stroke-width="3"/>
      <rect x="840" y="2346" width="471" height="42" fill="#f5f5f5" fill-opacity=".7"/><path d="M1099 2346v42" stroke="#a8daff" stroke-width="3"/>
      <g class="legal"><text x="968" y="2376">Map data ©2020</text><text x="1204" y="2376">Terms of Use</text></g>
    </g>
  </svg>
  </section>

  <section class="card rentals">
    <div class="band"><h1>122 Active Rentals</h1><svg class="ic blue"><use href="#info"/></svg></div>
    <div class="head"><h2>Rental Type</h2><p>54% Entire Home rentals</p></div>
    <svg class="chart" width="881" height="175" viewBox="20 1490 881 175">
      <path class="grid" d="M120 1495.500h5.500V1631M247.500 1495v130M369.500 1495v130M491.500 1495v130M613.500 1495v130M735.500 1495v130M857.500 1495v130M119 1625.500h750M119 1516.500h6M119 1560.500h6M119 1603.500h6"/>
      <path class="bar" stroke="#ededed" d="M128.500 1516.500h737M128.500 1560h737M128.500 1603.500h737"/>
      <path class="bar" stroke="#9c27b0" d="M128.500 1516.500h395.500"/><path class="bar" stroke="#55b8f8" d="M128.500 1560h322"/><path class="bar" stroke="#00c6a9" d="M128.500 1603.500h5"/>
      <g class="end"><text x="116" y="1521">Entire Home</text><text x="116" y="1564">Private Room</text><text x="116" y="1608">Shared Room</text></g>
      <g class="mid"><text x="125.500" y="1640">0</text><text x="247.500" y="1640">20</text><text x="369.500" y="1640">40</text><text x="491.500" y="1640">60</text><text x="613.500" y="1640">80</text><text x="735.500" y="1640">100</text><text x="857.500" y="1640">120</text></g>
    </svg>
  </section>

  <section class="card channel">
    <div class="head"><h2>Rental Channel</h2></div>
    <div class="channels">
      <div><span><svg width="66" height="22" viewBox="297 1765 66 22"><path d="M307.500 1782c-2.500-3-4-5.300-4-7.500a4 4 0 0 1 8 0c0 2.200-1.500 4.500-4 7.500zm0 0c-2 2.500-3.800 3.700-5.800 3.700-2.400 0-4-2-3.200-4.500.5-1.800 4.700-10.600 6.300-13.200 1.200-2 4.200-2 5.400 0 1.600 2.600 5.800 11.400 6.300 13.200.8 2.500-.8 4.500-3.200 4.500-2 0-3.800-1.200-5.800-3.700z" fill="none" stroke="#ff5a5f" stroke-width="1.200"/><text x="320.500" y="1781" class="airbnb" textLength="42" lengthAdjust="spacingAndGlyphs">airbnb</text></svg></span><b>90%</b></div>
      <div><span><svg width="64" height="22" viewBox="428 1765 64 22"><defs><linearGradient id="vf" gradientUnits="userSpaceOnUse" x1="428" y1="1775" x2="432" y2="1774" spreadMethod="repeat"><stop offset="0" stop-color="#2c59a8"/><stop offset=".5" stop-color="#2c62b4"/><stop offset=".62" stop-color="#9cc8f4"/><stop offset="1" stop-color="#5da3e6"/></linearGradient></defs><text x="428" y="1785" class="vrbo" fill="url(#vf)" textLength="62" lengthAdjust="spacingAndGlyphs">Vrbo</text><path d="M437 1769l2 14M441 1768l-1 12" stroke="#f0b08f" stroke-width="1"/></svg></span><b>4%</b></div>
      <div><span>Listed on Both</span><b>6%</b></div>
    </div>
  </section>

  <section class="card size">
    <div class="head"><h2>Rental Size</h2><p>2 Bedrooms / 5.6 Guests on average</p></div>
    <svg class="chart" width="881" height="190" viewBox="20 1910 881 190">
      <path class="grid" d="M75 1915.500h794M75 1940.500h794M75 1965.500h794M75 1990.500h794M75 2015.500h794M75 2040.500h794M75.500 1915v130M141.500 2040v5M273.500 2040v5M406.500 2040v5M538.500 2040v5M670.500 2040v5M803.500 2040v5M869.500 2040v5"/>
      <g class="col"><path stroke="#ededed" d="M141.700 1920v115M274 1920v115M406.300 1920v115M538.500 1920v115M670.800 1920v115M803.200 1920v115"/>
      <path stroke="#3f51b5" d="M141.700 2030v5M274 1920v115M406.300 1970v65M538.500 1975v60M670.800 2010v25M803.200 2034.900v.1"/></g>
      <g class="end"><text x="69.500" y="1919">25</text><text x="69.500" y="1944">20</text><text x="69.500" y="1969">15</text><text x="69.500" y="1994">10</text><text x="69.500" y="2019">5</text><text x="69.500" y="2044">0</text></g>
      <g class="mid"><text x="141.700" y="2058">Studio</text><text x="274" y="2058">1</text><text x="406.300" y="2058">2</text><text x="538.500" y="2058">3</text><text x="670.800" y="2058">4</text><text x="803.300" y="2058">5+</text><text x="803.300" y="2071">Rooms</text></g>
    </svg>
  </section>

  <section class="card growth">
    <div class="head"><h2>Rental Growth</h2><p>-12% Quarterly Growth<br><svg class="ic"><use href="#info"/></svg> Aug '17 - Vrbo Data Added</p></div>
    <svg class="chart" width="881" height="160" viewBox="20 2205 881 160">
      <path class="grid" d="M64 2215.500h6.500V2325M64 2236.500h805M64 2264.500h805M64 2292.500h805M64 2320.500h805M101.500 2320v5M162.500 2320v5M224.500 2320v5M285.500 2320v5M347.500 2320v5M408.500 2320v5M469.500 2320v5M531.500 2320v5M592.500 2320v5M654.500 2320v5M715.500 2320v5M776.500 2320v5M838.500 2320v5M869.500 2320v5"/>
      <path fill="#00bf90" fill-opacity=".05" d="M101 2254C121 2252 142 2249 162.700 2248.900S203 2250.700 224 2250.700S265 2250 285.500 2248.900S326 2244.500 347 2244.300S388 2246 408.400 2245.700S449 2244 469.800 2241.800S511 2237 531.200 2233.900S572 2224 592.600 2223.400S633 2224 654 2222.900S695 2215 715.500 2215.400S757 2220 776.900 2223.900L838.300 2235.700V2320H101z"/>
      <path fill="none" stroke="#00bcd4" stroke-width="2" d="M101 2254C121 2252 142 2249 162.700 2248.900S203 2250.700 224 2250.700S265 2250 285.500 2248.900S326 2244.500 347 2244.300S388 2246 408.400 2245.700S449 2244 469.800 2241.800S511 2237 531.200 2233.900S572 2224 592.600 2223.400S633 2224 654 2222.900S695 2215 715.500 2215.400S757 2220 776.900 2223.900L838.300 2235.700"/>
      <g fill="#00bcd4" stroke="#1ed6b5" stroke-width="1.500"><circle cx="101.300" cy="2254.600" r="4"/><circle cx="162.700" cy="2249" r="4"/><circle cx="224.100" cy="2250.700" r="4"/><circle cx="285.500" cy="2249" r="4"/><circle cx="347" cy="2244.300" r="4"/><circle cx="408.400" cy="2245.700" r="4"/><circle cx="469.800" cy="2241.800" r="4"/><circle cx="531.200" cy="2234" r="4"/><circle cx="592.600" cy="2223.900" r="4"/><circle cx="654" cy="2223" r="4"/><circle cx="715.500" cy="2215.500" r="4"/><circle cx="776.900" cy="2224" r="4"/><circle cx="838.300" cy="2235.700" r="4"/></g>
      <g class="end"><text x="64.500" y="2239">150</text><text x="64.500" y="2267">100</text><text x="64.500" y="2295">50</text><text x="64.500" y="2323">0</text></g>
      <g class="mid"><text x="101.500" y="2338">Q3</text><text x="163" y="2338">Q4</text><text x="224" y="2338">Q1</text><text x="285.500" y="2338">Q2</text><text x="347" y="2338">Q3</text><text x="408.500" y="2338">Q4</text><text x="470" y="2338">Q1</text><text x="531" y="2338">Q2</text><text x="592.500" y="2338">Q3</text><text x="654" y="2338">Q4</text><text x="715.500" y="2338">Q1</text><text x="777" y="2338">Q2</text><text x="838.500" y="2338">Q3</text>
      <text x="101.500" y="2351">'17</text><text x="163" y="2351">'17</text><text x="224" y="2351">'18</text><text x="285.500" y="2351">'18</text><text x="347" y="2351">'18</text><text x="408.500" y="2351">'18</text><text x="470" y="2351">'19</text><text x="531" y="2351">'19</text><text x="592.500" y="2351">'19</text><text x="654" y="2351">'19</text><text x="715.500" y="2351">'20</text><text x="777" y="2351">'20</text><text x="838.500" y="2351">'20</text></g>
    </svg>
  </section>

  <section class="card amen">
    <div class="head"><h2>Amenities</h2></div>
    <svg class="chart" width="881" height="310" viewBox="20 2462 881 310">
      <path class="grid" d="M134 2467.500h6.500V2747M285.500 2467v275M430.500 2467v275M574.500 2467v275M719.500 2467v275M864.500 2467v280M134 2742.500h731M134 2480.500h6M134 2507.500h6M134 2534.500h6M134 2561.500h6M134 2588.500h6M134 2615.500h6M134 2642.500h6M134 2674.500h6M134 2701.500h6M134 2728.500h6"/>
      <path class="bar" stroke="#ededed" d="M143.500 2480.500h717M143.500 2507.500h717M143.500 2534.500h717M143.500 2561.500h717M143.500 2588.500h717M143.500 2615.500h717M143.500 2642.500h717M143.500 2674.500h717M143.500 2701.500h717M143.500 2728.500h717"/>
      <path class="bar" stroke="#3f51b5" d="M143.500 2480.500H845.500M143.500 2507.500H824M143.500 2534.500H660.500M143.500 2561.500H806M143.500 2588.500H718.500M143.500 2615.500H812M143.500 2642.500H842.500M143.500 2674.500H267M143.500 2701.500H239.500M143.500 2728.500H209.500"/>
      <g class="end"><text x="131" y="2485">Air Conditioning</text><text x="131" y="2512">Heating</text><text x="131" y="2539">Washer</text><text x="131" y="2566">Dryer</text><text x="131" y="2593">Kitchen</text><text x="131" y="2620">Parking</text><text x="131" y="2647">Internet</text><text x="131" y="2679">Cable TV</text><text x="131" y="2706">Pool</text><text x="131" y="2733">Hot Tub</text></g>
      <g class="mid"><text x="140.500" y="2757">0%</text><text x="285.500" y="2757">20%</text><text x="430" y="2757">40%</text><text x="575" y="2757">60%</text><text x="720" y="2757">80%</text><text x="864.500" y="2757">100%</text></g>
    </svg>
  </section>

  <section class="card ratings">
    <div class="head"><h2>Airbnb Ratings</h2></div>
    <svg class="chart" width="881" height="220" viewBox="20 2860 881 220">
      <circle cx="384" cy="2959" r="70.300" fill="none" stroke="#f5f5f5" stroke-width="2"/>
      <g stroke-width="1.200"><path d="M329.500 2927.500L384 2901" stroke="#705bea"/><path d="M384 2901L435.500 2929" stroke="#f6b23c"/><path d="M435.500 2929L439.700 2991" stroke="#2196f3"/><path d="M439.700 2991L384 3021" stroke="#0f9488"/><path d="M384 3021L336 2986.500" stroke="#0b68a0"/><path d="M336 2986.500L329.500 2927.500" stroke="#ff9800"/></g>
      <circle cx="384" cy="2901" r="4" fill="#705bea"/><circle cx="435.500" cy="2929" r="4" fill="#fbb23d"/><circle cx="439.700" cy="2991" r="4" fill="#2196f3"/><circle cx="384" cy="3021" r="4" fill="#0f9488"/><circle cx="336" cy="2986.500" r="4" fill="#0b68a0"/><circle cx="329.500" cy="2927.500" r="4" fill="#ff9800"/>
      <g class="rt"><text x="359" y="2881">Accuracy</text><text x="449.700" y="2923">Value</text><text x="442" y="3008">Location</text><text x="341" y="3051">Communication</text><text x="270.500" y="3008">Cleanliness</text><text x="277.500" y="2923">Check In</text>
      <text x="519" y="2910">Overall Rating:</text><text x="519" y="2971">Rated at Least 4.5 Overall:</text><g class="big"><text x="519" y="2929.700">4.77</text><text x="519" y="2991">92%</text></g></g>
    </svg>
  </section>

  <section class="card activity">
    <div class="head"><h2>Rental Activity <svg class="ic"><use href="#info"/></svg></h2><p>41% Available Full Time</p></div>
    <svg class="chart" width="881" height="180" viewBox="20 3155 881 180">
      <g fill="none" stroke-width="20">
        <g transform="rotate(-90 361 3241)"><circle cx="361" cy="3241" r="70" stroke="#818ef7"/><circle cx="361" cy="3241" r="70" pathLength="360" stroke="#6b7be6" stroke-dasharray="0 115.700 94.600 360"/><circle cx="361" cy="3241" r="70" pathLength="360" stroke="#5969d4" stroke-dasharray="0 210.300 76.400 360"/><circle cx="361" cy="3241" r="70" pathLength="360" stroke="#3f4fba" stroke-dasharray="0 286.700 73.300 0"/></g>
        <g transform="rotate(-90 561 3241)"><circle cx="561" cy="3241" r="70" stroke="#84cfff"/><circle cx="561" cy="3241" r="70" pathLength="360" stroke="#59c1ff" stroke-dasharray="0 195 103.700 360"/><circle cx="561" cy="3241" r="70" pathLength="360" stroke="#00aaff" stroke-dasharray="0 298.700 58.300 360"/><circle cx="561" cy="3241" r="70" pathLength="360" stroke="#118fe8" stroke-dasharray="0 357 3 0"/></g>
      </g>
      <path stroke="#fff" d="M361 3160v22M414.500 3267l19 9.500M331 3292.500l-10.500 18.500M304 3224l-20-6M561 3160v22M545.500 3298.500l-5.500 20M508.500 3212.500l-18-10M557.500 3182l-.8-22"/>
      <g class="pct"><text x="319.300" y="3188">20%</text><text x="420.300" y="3207">32%</text><text x="381.500" y="3311">26%</text><text x="296" y="3270">21%</text><text x="524" y="3185">16%</text><text x="630.500" y="3253">54%</text><text x="496.500" y="3271">29%</text></g>
      <g class="ring"><text x="361" y="3251">Available</text><text x="561" y="3251">Booked</text></g>
    </svg>
  </section>

  <section class="card settings">
    <div class="head"><h2>Rental Settings</h2></div>
    <h3>Cancellation Policy</h3>
    <div class="stack"><span style="width:426px;background:#66cbb0">flexible</span><span style="width:249px;background:#3f51b5">moderate</span><span style="width:164px;background:#ff964b">strict</span></div>
    <h3 class="next">Minimum Stay</h3>
    <div class="stack"><span style="width:496px;background:#2196f3">1Night</span><span style="width:234px;background:#705bea">2</span><span style="width:39px;background:#0b68a0">3</span><span style="width:27px;background:#3f51b5">4-6</span><span style="width:28px;background:#ff9800">7-29</span><span style="width:15px;background:#66cbb0"></span></div>
  </section>
</main>
<div class="edge"></div>
<div class="scroll"></div>
</body>
</html>
```
FILE: styles.css
```css
* { box-sizing: border-box; margin: 0; padding: 0; }
body { position: relative; width: 929px; height: 3552px; overflow: hidden; background: #f0f3fd; font-family: "Open Sans", "Liberation Sans", sans-serif; color: #666; }
.defs { position: absolute; }
svg { display: block; flex: none; }
.topbar { height: 60px; background: #fff; display: flex; align-items: center; justify-content: space-between; padding: 3px 36px 0 20px; }
.burger { width: 30px; display: flex; flex-direction: column; gap: 8px; margin-bottom: 2px; }
.burger i { height: 2px; background: #9fa8da; }
.logo { margin-left: 1px; overflow: visible; }
.logo-main { font: 600 21.500px Inter, sans-serif; fill: #3f51b5; }
.logo-sub { font: 400 7.500px Inter, sans-serif; fill: #8f99d4; }
.login { font-size: 11.500px; color: #3f51b5; }
.page { padding: 20px 28px 20px 20px; }
.filters { display: flex; height: 60px; align-items: flex-start; }
.select { width: 264px; height: 36px; background: #fff; border: 1px solid #e4e8f7; border-radius: 3px; display: flex; justify-content: space-between; padding: 6px 9px 0 10px; font-size: 14px; line-height: 28px; color: #0a0a50; }
.select i { width: 0; height: 0; margin-top: 9px; border: 5px solid transparent; border-top: 6px solid #999; border-bottom: 0; }
.second { margin-left: 18px; }
.purchase { margin-left: 27px; width: 95px; height: 40px; border-radius: 4px; background: #00c6a9; color: #fff; font-weight: 600; font-size: 14px; line-height: 40px; text-align: center; }
.card { background: #fff; border-radius: 4px; box-shadow: 0 1px 1px #d3daf2; overflow: hidden; margin-bottom: 20px; }
h2 { font-size: 16px; font-weight: 400; line-height: 22px; color: #666; }
.ic { width: 14px; height: 14px; color: #ccc; }
.ic.blue { color: #7986cb; }
.grade { height: 189px; padding: 15px 20px; }
.grade-body { display: flex; margin-top: 9px; }
.overall { width: 150px; height: 127px; background: #f7f7f7; border-radius: 4px; display: flex; flex-direction: column; align-items: center; font-size: 14px; font-weight: 300; color: #777; padding-top: 7px; line-height: 20px; }
.overall svg { margin-top: 11px; }
.rows { margin: 4px 0 0 30px; }
.row { height: 24px; display: flex; align-items: center; font-size: 12px; font-weight: 300; color: #555; }
.row label { width: 100px; margin-left: 5px; }
.track { width: 509px; height: 7px; border-radius: 4px; background: #ededed; }
.track b { display: block; height: 7px; border-radius: 4px; background: #3f51b5; }
.row em { font-style: normal; margin-left: 11px; }
.lk { width: 12px; height: 16px; margin-left: 11px; }
.trio { display: grid; grid-template-columns: 284px 283px 284px; gap: 15px; margin-bottom: 20px; }
.stat { height: 179px; margin: 0; padding: 10px 20px 0 10px; }
.stat-head { display: flex; justify-content: space-between; }
.stat-head h2 { margin-top: 3px; }
.stat-body { display: flex; justify-content: space-between; height: 90px; margin-top: 8px; }
.stat-body strong { font-size: 25px; font-weight: 300; color: #3f51b5; line-height: 34px; margin-top: 30px; }
.stat-body .spark { margin-right: 13px; }
.spark path { fill: none; stroke-width: 2; }
.spark .shade { stroke: #000; stroke-opacity: .035; stroke-width: 5; transform: translate(0, 6px); }
.spark text { font-size: 12px; font-weight: 400; fill: #3f51b5; text-anchor: middle; }
.view { display: flex; align-items: center; gap: 5px; font-size: 12px; color: #3f51b5; line-height: 17px; margin-top: 12px; }
.under { text-decoration: underline; }
.map { height: 788px; margin-bottom: 26px; }
.mapsvg { font-family: Roboto, sans-serif; }
.towns text { font-size: 40px; text-anchor: middle; paint-order: stroke; stroke: #fff; stroke-width: 7px; stroke-opacity: .75; stroke-linejoin: round; }
.towns > text { fill: #4f5566; }
.towns > text[fill] { fill: #c5353b; }
.towns .area { font-size: 25px; letter-spacing: 3.500px; fill: #76839f; font-weight: 500; }
.towns .lake { font-size: 39px; fill: #4d86c4; stroke: none; }
.towns .i35 { font-size: 26px; fill: #8a5a10; font-weight: 500; }
.us rect, .us path { fill: #fff; stroke: #5b5f6a; stroke-width: 4px; }
.us text { font-size: 27px; text-anchor: middle; fill: #40444f; }
.inter path { fill: #3b78c8; }
.inter .red { fill: #d85757; }
.inter text { font-size: 27px; font-weight: 700; text-anchor: middle; fill: #fff; }
.google { font: 500 58px Lato, sans-serif; fill: #fff; stroke: #888; stroke-width: 1px; }
.ctl rect { fill: #fff; filter: drop-shadow(0 2px 4px rgba(0,0,0,.25)); }
.legal text { font-size: 30px; fill: #333; text-anchor: middle; }
.band { height: 71px; background: #efefef; display: flex; justify-content: space-between; align-items: center; padding: 0 20px; }
h1 { font-size: 22px; font-weight: 300; color: #3f51b5; }
.head { display: flex; justify-content: space-between; align-items: flex-start; padding: 0 20px; }
.head p { font-size: 14px; font-weight: 300; color: #999; text-align: right; line-height: 20px; padding-top: 1px; }
.head .ic { display: inline-block; vertical-align: -1px; }
.rentals { height: 308px; }
.rentals .head { padding-top: 17px; height: 57px; }
.grid { fill: none; stroke: #f2f2f2; stroke-width: 1; }
.bar { stroke-width: 7; stroke-linecap: round; fill: none; }
.col path { stroke-width: 10; stroke-linecap: round; }
.chart text { font-size: 12px; font-weight: 300; fill: #555; }
.end text { text-anchor: end; }
.mid text { text-anchor: middle; }
.channel { height: 143px; }
.channel .head { padding-top: 17px; }
.channels { display: flex; gap: 30px; justify-content: center; margin-top: 30px; }
.channels div { width: 100px; text-align: center; }
.channels span { display: flex; justify-content: center; align-items: center; height: 33px; border-bottom: 2px solid #ededed; font-size: 14px; color: #444; padding-bottom: 2px; }
.channels b { display: block; font-size: 16px; font-weight: 600; line-height: 22px; margin-top: 2px; color: #555; }
.airbnb { font: 700 15px Lato, sans-serif; fill: #ff5a5f; }
.vrbo { font: italic 700 26px "Liberation Serif", serif; }
.size { height: 257px; }
.size .head { padding-top: 17px; height: 57px; }
.growth { height: 255px; }
.growth .head { padding-top: 17px; height: 75px; }
.amen { height: 382px; }
.amen .head { padding-top: 17px; height: 57px; }
.ratings { height: 277px; }
.ratings .head { padding-top: 17px; height: 53px; }
.chart .rt text { font-size: 11px; font-weight: 400; fill: #777; }
.chart .big text { font-size: 16px; font-weight: 600; fill: #555; }
.activity { height: 237px; }
.activity .head { padding-top: 17px; height: 51px; }
.activity h2 .ic { margin-left: 7px; }
.chart .pct text { font-size: 9.500px; font-weight: 600; fill: #fff; text-anchor: middle; }
.chart .ring text { font-size: 19px; font-weight: 400; fill: #666; text-anchor: middle; }
.settings { height: 171px; }
.settings .head { padding-top: 17px; height: 57px; }
h3 { font-size: 12px; font-weight: 400; color: #777; line-height: 17px; margin-left: 20px; }
.next { margin-top: 20px; }
.stack { display: flex; height: 20px; margin-left: 20px; }
.stack span { height: 20px; border: 1px solid rgba(255,255,255,.55); color: #fff; font-size: 10px; line-height: 18px; text-align: center; white-space: nowrap; }
.edge { position: absolute; left: 0; top: 0; width: 1px; height: 3552px; background: repeating-linear-gradient(transparent 0 60px, #dfe3f5 60px 888px); }
.scroll { position: absolute; left: 921px; top: 0; width: 8px; height: 3552px; background: linear-gradient(#c8c8cb, #c8c8cb) 0 0 / 8px 222px no-repeat, linear-gradient(#c8c8cb, #c8c8cb) 0 1110px / 8px 222px no-repeat, linear-gradient(#c8c8cb, #c8c8cb) 0 2220px / 8px 222px no-repeat, linear-gradient(#c8c8cb, #c8c8cb) 0 3330px / 8px 222px no-repeat, #f5f7fe; }
```
